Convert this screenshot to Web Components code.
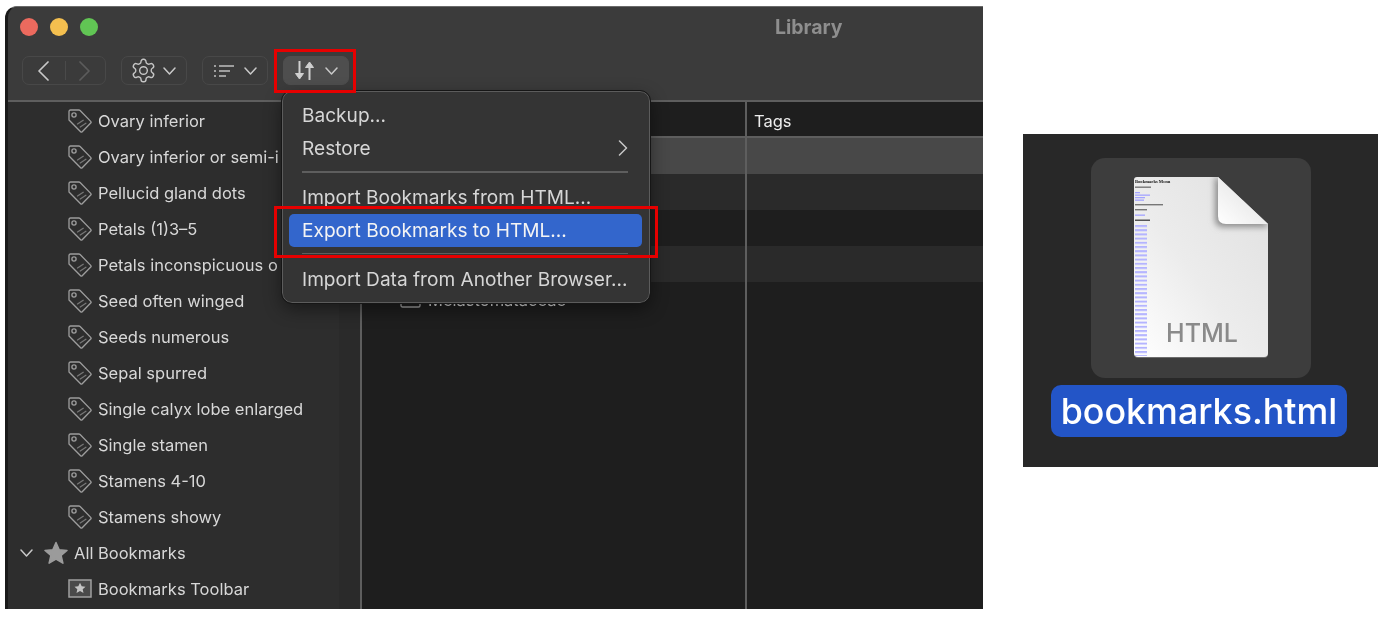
<!DOCTYPE html>
<html>
<head>
<meta charset="utf-8">
<title>Library</title>
<style>
    html, body { margin: 0; height: 100%; background: #fff; overflow: hidden; }
    body { display: flex; align-items: flex-start; font-family: Inter, "Liberation Sans", sans-serif; }
</style>
</head>
<body>
<lib-window>
    <lib-toolbar slot="toolbar">
        <tool-button>
            <svg width="22" height="20" viewBox="0 0 22 20" fill="none" stroke="#c8c8c8" stroke-width="1.7" stroke-linecap="round" stroke-linejoin="round"><path d="M14 1 5 10l9 9"/></svg>
            <span class="sep"></span>
            <svg style="margin-left:-3px" width="22" height="20" viewBox="0 0 22 20" fill="none" stroke="#5c5c5c" stroke-width="1.7" stroke-linecap="round" stroke-linejoin="round"><path d="m8 1 9 9-9 9"/></svg>
        </tool-button>
        <tool-button menu tight>
            <svg style="margin-left:-3px" width="27" height="27" viewBox="0 0 24 24" fill="none" stroke="#c4c4c4" stroke-width="1.25" stroke-linejoin="round"><path d="M12.22 2h-.44a2 2 0 0 0-2 2v.18a2 2 0 0 1-1 1.73l-.43.25a2 2 0 0 1-2 0l-.15-.08a2 2 0 0 0-2.73.73l-.22.38a2 2 0 0 0 .73 2.73l.15.1a2 2 0 0 1 1 1.72v.51a2 2 0 0 1-1 1.74l-.15.09a2 2 0 0 0-.73 2.73l.22.38a2 2 0 0 0 2.73.73l.15-.08a2 2 0 0 1 2 0l.43.25a2 2 0 0 1 1 1.73V20a2 2 0 0 0 2 2h.44a2 2 0 0 0 2-2v-.18a2 2 0 0 1 1-1.73l.43-.25a2 2 0 0 1 2 0l.15.08a2 2 0 0 0 2.73-.73l.22-.39a2 2 0 0 0-.73-2.73l-.15-.08a2 2 0 0 1-1-1.74v-.5a2 2 0 0 1 1-1.74l.15-.09a2 2 0 0 0 .73-2.73l-.22-.38a2 2 0 0 0-2.73-.73l-.15.08a2 2 0 0 1-2 0l-.43-.25a2 2 0 0 1-1-1.73V4a2 2 0 0 0-2-2z"/><circle cx="12" cy="12" r="3.4"/></svg>
        </tool-button>
        <tool-button menu>
            <svg width="20" height="14" viewBox="0 0 20 14" fill="none" stroke="#c0c0c0" stroke-width="1.5"><path d="M0 2h2M0 7h2M0 12h2M5 2h15M5 7h11M5 12h7"/></svg>
        </tool-button>
        <tool-button menu active>
            <svg width="21" height="19" viewBox="0 0 21 19" fill="#d0d0d0" stroke="#d0d0d0" stroke-width="2"><path d="M5.500 0v14" fill="none"/><path d="M1.500 12.500h8L5.500 18z" stroke-width="1" stroke-linejoin="round"/><path d="M15.500 19V5" fill="none"/><path d="M11.500 6.500h8L15.500 1z" stroke-width="1" stroke-linejoin="round"/></svg>
        </tool-button>
    </lib-toolbar>

    <lib-sidebar slot="sidebar">
        <side-row kind="tag">Ovary inferior</side-row>
        <side-row kind="tag">Ovary inferior or semi-i</side-row>
        <side-row kind="tag">Pellucid gland dots</side-row>
        <side-row kind="tag">Petals (1)3–5</side-row>
        <side-row kind="tag">Petals inconspicuous o</side-row>
        <side-row kind="tag">Seed often winged</side-row>
        <side-row kind="tag">Seeds numerous</side-row>
        <side-row kind="tag">Sepal spurred</side-row>
        <side-row kind="tag">Single calyx lobe enlarged</side-row>
        <side-row kind="tag">Single stamen</side-row>
        <side-row kind="tag">Stamens 4-10</side-row>
        <side-row kind="tag">Stamens showy</side-row>
        <side-row kind="all">All Bookmarks</side-row>
        <side-row kind="toolbar">Bookmarks Toolbar</side-row>
    </lib-sidebar>

    <lib-table slot="table"></lib-table>

    <lib-menu slot="overlay">
        <menu-item>Backup…</menu-item>
        <menu-item submenu>Restore</menu-item>
        <menu-sep></menu-sep>
        <menu-item>Import Bookmarks from HTML…</menu-item>
        <menu-item selected>Export Bookmarks to HTML…</menu-item>
        <menu-sep></menu-sep>
        <menu-item>Import Data from Another Browser…</menu-item>
    </lib-menu>

    <red-box slot="overlay" style="left:266px;top:42px;width:76px;height:38px"></red-box>
    <red-box slot="overlay" style="left:266px;top:199px;width:378px;height:46px"></red-box>
</lib-window>

<file-tile>bookmarks.html</file-tile>

<script>
const TAG_ICON = `<svg width="24" height="24" viewBox="0 0 24 24" fill="none" stroke="#9c9c9c" stroke-width="1.35" stroke-linejoin="round" stroke-linecap="round"><path d="M2.500 1h8.300c.5 0 1 .2 1.300.5l10.600 10.900c.5.5.5 1.100 0 1.600l-8.500 8.700c-.5.5-1.100.5-1.600 0L1.500 11.600C1.200 11.300 1 10.800 1 10.400V2.500C1 1.600 1.600 1 2.500 1z"/><circle cx="6" cy="6" r="2.100"/><path d="M9.500 15l5.700-3.700M12.200 18l5.700-3.700" stroke="#777"/></svg>`;

const STAR_ICON = `<svg width="24" height="24" viewBox="0 0 24 24" fill="#9b9b9b" stroke="#9b9b9b" stroke-width="1.500" stroke-linejoin="round"><path d="M12 1.500l3.200 7.200 7.800.7-5.900 5.100 1.800 7.700L12 18.200l-6.900 4 1.800-7.700L1 9.400l7.800-.7z"/></svg>`;

const TOOLBAR_ICON = `<svg width="24" height="20" viewBox="0 0 24 20"><rect x="1" y="1" width="22" height="17" fill="#4a4a4a" stroke="#a0a0a0" stroke-width="1.500"/><path d="M12 3.800l1.700 3.500 3.800.4-2.800 2.500.8 3.800-3.500-1.900-3.500 1.900.8-3.800-2.800-2.500 3.800-.4z" fill="#c4c4c4"/></svg>`;

class LibWindow extends HTMLElement {
    constructor() {
        super();
        this.shadowObj = this.attachShadow({ mode: 'open' });
        this.shadowObj.innerHTML = `
        <style>
            :host {
                display: flex;
                flex-direction: column;
                position: relative;
                flex: none;
                width: 975px;
                height: 602px;
                margin: 6px 0 0 5px;
                background: #2c2c2c;
                border-left: 3px solid #1a1a1a;
                border-top: 1px solid #6a6a6a;
                border-top-left-radius: 12px;
                overflow: hidden;
                filter: blur(.3px);
            }
            .titlebar {
                display: flex;
                align-items: center;
                height: 40px;
                padding-left: 12px;
                gap: 12px;
                background: #3b3b3b;
                flex: none;
            }
            .light { width: 18px; height: 18px; border-radius: 50%; }
            .title {
                margin-left: 665px;
                font-size: 19.5px;
                font-weight: 700;
                color: #8e8e8e;
            }
            .body { display: flex; flex: 1; min-height: 0; }
        </style>
        <div class="titlebar">
            <span class="light" style="background:#ec6a5e"></span>
            <span class="light" style="background:#f4bf4f"></span>
            <span class="light" style="background:#61c554"></span>
            <span class="title">Library</span>
        </div>
        <slot name="toolbar"></slot>
        <div class="body">
            <slot name="sidebar"></slot>
            <slot name="table"></slot>
        </div>
        <slot name="overlay"></slot>
        `;
    }
}

class LibToolbar extends HTMLElement {
    constructor() {
        super();
        this.shadowObj = this.attachShadow({ mode: 'open' });
        this.shadowObj.innerHTML = `
        <style>
            :host {
                display: flex;
                align-items: flex-start;
                gap: 15px;
                height: 55px;
                padding: 9px 0 0 14px;
                box-sizing: border-box;
                background: #3b3b3b;
                border-bottom: 2px solid #5e5e5e;
                flex: none;
            }
        </style>
        <slot></slot>
        `;
    }
}

class ToolButton extends HTMLElement {
    constructor() {
        super();
        this.shadowObj = this.attachShadow({ mode: 'open' });
        const menu = this.hasAttribute('menu');
        this.shadowObj.innerHTML = `
        <style>
            :host {
                display: flex;
                align-items: center;
                justify-content: center;
                gap: 10px;
                height: 29px;
                box-sizing: border-box;
                width: ${menu ? '66px' : '84px'};
                border: 1px solid #484848;
                border-radius: 7px;
            }
            :host([tight]) { gap: 6px; }
            :host([active]) { background: #4e4e4e; border-color: #4e4e4e; }
            ::slotted(.sep) { width: 1px; height: 19px; background: #4a4a4a; margin: 0 -1px; }
        </style>
        <slot></slot>
        ${menu ? `<svg width="13" height="8" viewBox="0 0 13 8" fill="none" stroke="#c8c8c8" stroke-width="1.500" stroke-linecap="round" stroke-linejoin="round"><path d="M1 1l5.500 6L12 1"/></svg>` : ''}
        `;
    }
}

class LibSidebar extends HTMLElement {
    constructor() {
        super();
        this.shadowObj = this.attachShadow({ mode: 'open' });
        this.shadowObj.innerHTML = `
        <style>
            :host {
                display: block;
                width: 354px;
                flex: none;
                box-sizing: border-box;
                padding-top: 1px;
                overflow: hidden;
                background: linear-gradient(90deg, #2d2d2d 331px, #2a2a2a 331px);
                border-right: 2px solid #5e5e5e;
            }
        </style>
        <slot></slot>
        `;
    }
}

class SideRow extends HTMLElement {
    constructor() {
        super();
        this.shadowObj = this.attachShadow({ mode: 'open' });
        const kind = this.getAttribute('kind');
        let lead = '';
        if (kind === 'tag') lead = TAG_ICON;
        if (kind === 'toolbar') lead = TOOLBAR_ICON;
        if (kind === 'all') {
            lead = `<svg class="twist" width="13" height="8" viewBox="0 0 13 8" fill="none" stroke="#c8c8c8" stroke-width="1.500" stroke-linecap="round" stroke-linejoin="round"><path d="M1 1l5.500 6L12 1"/></svg>${STAR_ICON}`;
        }
        this.shadowObj.innerHTML = `
        <style>
            :host {
                display: flex;
                align-items: center;
                gap: 6px;
                height: 36px;
                padding-left: ${kind === 'all' ? '12px' : '60px'};
                font-size: 16.5px;
                color: #d8d8d8;
                white-space: nowrap;
            }
            .twist { margin-right: 5px; }
            svg { flex: none; }
        </style>
        ${lead}<slot></slot>
        `;
    }
}

class LibTable extends HTMLElement {
    constructor() {
        super();
        this.shadowObj = this.attachShadow({ mode: 'open' });
        this.shadowObj.innerHTML = `
        <style>
            :host {
                display: flex;
                flex-direction: column;
                flex: 1;
                min-width: 0;
                background: #1e1e1e;
                font-size: 16.5px;
                color: #d8d8d8;
            }
            .head, .row { display: grid; grid-template-columns: 383px 1fr; flex: none; }
            .head { height: 34px; border-bottom: 2px solid #5e5e5e; }
            .head span:last-child { border-left: 2px solid #5e5e5e; display: flex; align-items: center; padding: 3px 0 0 7px; color: #ececec; }
            .row { height: 36px; align-items: stretch; }
            .row div:last-child { border-left: 2px solid #5e5e5e; }
            .fill { flex: 1; }
            .sel { background: #484848; }
            .alt { background: #2a2a2a; }
            .name { display: flex; align-items: center; gap: 7px; padding-left: 38px; }
        </style>
        <div class="head"><span></span><span>Tags</span></div>
        <div class="row sel"><div></div><div></div></div>
        <div class="row alt"><div></div><div></div></div>
        <div class="row"><div></div><div></div></div>
        <div class="row alt"><div></div><div></div></div>
        <div class="row">
            <div class="name">
                <svg width="21" height="16" viewBox="0 0 21 16" fill="none" stroke="#a0a0a0" stroke-width="1.400"><path d="M2.500 1h16c.8 0 1.500.7 1.500 1.500v11c0 .8-.7 1.500-1.500 1.500h-16c-.8 0-1.500-.7-1.500-1.500v-11C1 1.700 1.700 1 2.500 1z"/></svg>
                <span>Melastomataceae</span>
            </div>
            <div></div>
        </div>
        <div class="row fill"><div></div><div></div></div>
        `;
    }
}

class LibMenu extends HTMLElement {
    constructor() {
        super();
        this.shadowObj = this.attachShadow({ mode: 'open' });
        this.shadowObj.innerHTML = `
        <style>
            :host {
                display: flex;
                flex-direction: column;
                position: absolute;
                left: 274px;
                top: 84px;
                width: 368px;
                height: 212px;
                box-sizing: border-box;
                padding: 6px 7px 0 6px;
                background: #343434;
                border: 1px solid #5c5c5c;
                outline: 1px solid #161616;
                border-radius: 10px;
                box-shadow: 0 6px 18px rgba(0, 0, 0, .45);
            }
        </style>
        <slot></slot>
        `;
    }
}

class MenuItem extends HTMLElement {
    constructor() {
        super();
        this.shadowObj = this.attachShadow({ mode: 'open' });
        this.shadowObj.innerHTML = `
        <style>
            :host {
                display: flex;
                align-items: center;
                justify-content: space-between;
                height: 33px;
                flex: none;
                padding: 0 14px 0 13px;
                border-radius: 5px;
                font-size: 19.1px;
                color: #d6d6d6;
                white-space: nowrap;
            }
            :host([selected]) { background: #3366cc; color: #f4f4f4; }
        </style>
        <slot></slot>
        ${this.hasAttribute('submenu') ? `<svg width="10" height="16" viewBox="0 0 10 16" fill="none" stroke="#c8c8c8" stroke-width="1.500" stroke-linecap="round" stroke-linejoin="round"><path d="M1.500 1l7 7-7 7"/></svg>` : ''}
        `;
    }
}

class MenuSep extends HTMLElement {
    constructor() {
        super();
        this.shadowObj = this.attachShadow({ mode: 'open' });
        const first = this.previousElementSibling && this.previousElementSibling.hasAttribute('submenu');
        this.shadowObj.innerHTML = `
        <style>
            :host {
                display: block;
                flex: none;
                height: 1.500px;
                margin: ${first ? 7 : 6}px 14px 8px 13px;
                background: #5e5e5e;
            }
        </style>
        `;
    }
}

class RedBox extends HTMLElement {
    constructor() {
        super();
        this.shadowObj = this.attachShadow({ mode: 'open' });
        this.shadowObj.innerHTML = `
        <style>
            :host {
                display: block;
                position: absolute;
                border: 3px solid #e60000;
            }
        </style>
        `;
    }
}

class FileTile extends HTMLElement {
    constructor() {
        super();
        this.shadowObj = this.attachShadow({ mode: 'open' });
        this.shadowObj.innerHTML = `
        <style>
            :host {
                display: flex;
                flex-direction: column;
                align-items: center;
                flex: none;
                width: 355px;
                height: 333px;
                margin: 134px 0 0 40px;
                padding-top: 24px;
                box-sizing: border-box;
                background: #282828;
                filter: blur(.4px);
            }
            .well {
                display: flex;
                align-items: center;
                justify-content: center;
                width: 220px;
                height: 220px;
                margin-left: 1px;
                background: #3d3d3d;
                border-radius: 14px;
            }
            .label {
                display: flex;
                align-items: center;
                height: 52px;
                margin-top: 7px;
                margin-left: -3px;
                padding: 0 10px;
                border-radius: 10px;
                background: #2355c7;
                color: #fff;
                font-size: 35.8px;
                font-weight: 450;
                white-space: nowrap;
            }
            svg { display: block; }
        </style>
        <div class="well">
            <svg width="137" height="184" viewBox="0 0 137 184">
                <defs>
                    <linearGradient id="page" x1="1" y1="0" x2="0" y2="1">
                        <stop offset="0" stop-color="#e0e0e0"/>
                        <stop offset=".55" stop-color="#ececec"/>
                        <stop offset="1" stop-color="#ffffff"/>
                    </linearGradient>
                    <linearGradient id="curl" x1="0" y1="1" x2="1" y2="0">
                        <stop offset="0" stop-color="#ffffff"/>
                        <stop offset="1" stop-color="#dcdcdc"/>
                    </linearGradient>
                    <pattern id="links" x="2" y="49" width="12" height="4.200" patternUnits="userSpaceOnUse">
                        <rect width="12" height="2" fill="#b4b4ff"/>
                    </pattern>
                    <clipPath id="sheet"><path d="M4 1h81l50 47v129a4 4 0 0 1-4 4H5a4 4 0 0 1-4-4V4a3 3 0 0 1 3-3z"/></clipPath>
                    <filter id="soft"><feGaussianBlur stdDeviation=".55"/></filter>
                    <filter id="drop" x="-30%" y="-30%" width="160%" height="160%"><feGaussianBlur stdDeviation="3.200"/></filter>
                </defs>
                <path d="M4 1h81l50 47v129a4 4 0 0 1-4 4H5a4 4 0 0 1-4-4V4a3 3 0 0 1 3-3z" fill="#6c6c6c" transform="translate(0 1)"/>
                <path d="M4 1h81l50 47v129a4 4 0 0 1-4 4H5a4 4 0 0 1-4-4V4a3 3 0 0 1 3-3z" fill="url(#page)"/>
                <g clip-path="url(#sheet)">
                    <path d="M85 1l50 47v3H90q-8 0-8-8V1z" fill="#8c8c8c" filter="url(#drop)"/>
                </g>
                <path d="M85 1l50 47H93q-8 0-8-8z" fill="url(#curl)"/>
                <g filter="url(#soft)">
                    <text x="2" y="6.500" font-family="Liberation Serif, serif" font-size="4.600" font-weight="700" fill="#111">Bookmarks Menu</text>
                    <rect x="2" y="10.500" width="16" height="1.400" fill="#777"/>
                    <rect x="2" y="16" width="5" height="1.300" fill="#a4a4ff"/>
                    <rect x="2" y="18.500" width="15" height="1.300" fill="#a4a4ff"/>
                    <rect x="2" y="21" width="10" height="1.300" fill="#a4a4ff"/>
                    <rect x="2" y="23.500" width="9" height="1.300" fill="#a4a4ff"/>
                    <rect x="2" y="28" width="28" height="1.400" fill="#777"/>
                    <rect x="2" y="33" width="12" height="1.400" fill="#777"/>
                    <rect x="2" y="38.500" width="10" height="1.300" fill="#a4a4ff"/>
                    <rect x="2" y="43.500" width="15" height="1.500" fill="#555"/>
                    <rect x="2" y="49" width="12" height="131" fill="url(#links)"/>
                </g>
                <text x="69" y="166" text-anchor="middle" font-family="Inter, sans-serif" font-size="25" font-weight="500" fill="#8a8a8a">HTML</text>
            </svg>
        </div>
        <div class="label"><slot></slot></div>
        `;
    }
}

customElements.define('lib-window', LibWindow);
customElements.define('lib-toolbar', LibToolbar);
customElements.define('tool-button', ToolButton);
customElements.define('lib-sidebar', LibSidebar);
customElements.define('side-row', SideRow);
customElements.define('lib-table', LibTable);
customElements.define('lib-menu', LibMenu);
customElements.define('menu-item', MenuItem);
customElements.define('menu-sep', MenuSep);
customElements.define('red-box', RedBox);
customElements.define('file-tile', FileTile);
</script>
</body>
</html>
